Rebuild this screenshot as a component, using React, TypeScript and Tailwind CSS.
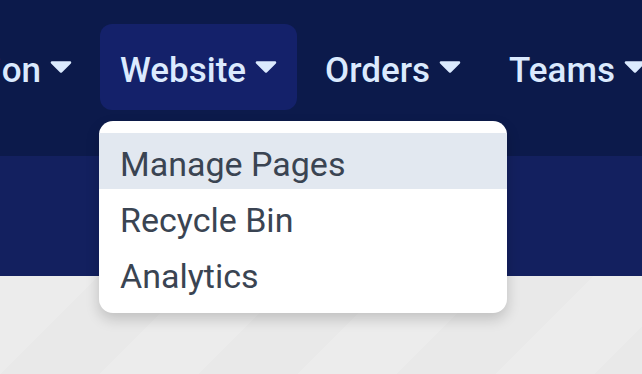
function Caret() {
  return (
    <svg width="22" height="12" viewBox="0 0 22 12" className="shrink-0">
      <polygon
        points="2,1.5 20,1.5 11,10.5"
        fill="#dbeafe"
        stroke="#dbeafe"
        strokeWidth="2.5"
        strokeLinejoin="round"
      />
    </svg>
  );
}

function NavItem({ label, active }: { label: string; active?: boolean }) {
  return (
    <div
      className={`flex items-center gap-[9px] h-[86px] px-5 rounded-xl shrink-0 ${
        active ? "bg-[#14216a]" : ""
      }`}
    >
      <span className="text-[35px] font-medium text-[#dbeafe] leading-none pt-[6px]">{label}</span>
      <Caret />
    </div>
  );
}

const items = ["Manage Pages", "Recycle Bin", "Analytics"];

export default function App() {
  return (
    <div
      className="w-[642px] h-[374px] overflow-hidden flex flex-col"
      style={{ fontFamily: "Roboto, 'Noto Sans', sans-serif" }}
    >
      <nav className="h-[156px] bg-[#0c1a4b] pt-6 shrink-0">
        <div className="flex items-center gap-2">
          <div className="w-[92px] overflow-hidden flex justify-end shrink-0">
            <NavItem label="Application" />
          </div>
          <div className="relative shrink-0">
            <NavItem label="Website" active />
            <div className="absolute left-[-1px] top-[97px] w-[408px] bg-white rounded-[14px] py-3 shadow-[0_6px_14px_rgba(0,0,0,0.18)] z-10">
              {items.map((item, i) => (
                <div
                  key={item}
                  className={`h-14 flex items-center px-[21px] pt-[5px] text-[34px] leading-none text-[#3a4452] ${
                    i === 0 ? "bg-[#e2e8f0]" : ""
                  }`}
                >
                  {item}
                </div>
              ))}
            </div>
          </div>
          <NavItem label="Orders" />
          <NavItem label="Teams" />
        </div>
      </nav>
      <div className="h-[120px] bg-[#13205f] shrink-0" />
      <div className="flex-1 bg-[repeating-linear-gradient(135deg,#ececec_0px,#ececec_70px,#e9e9e9_70px,#e9e9e9_140px)]" />
    </div>
  );
}
